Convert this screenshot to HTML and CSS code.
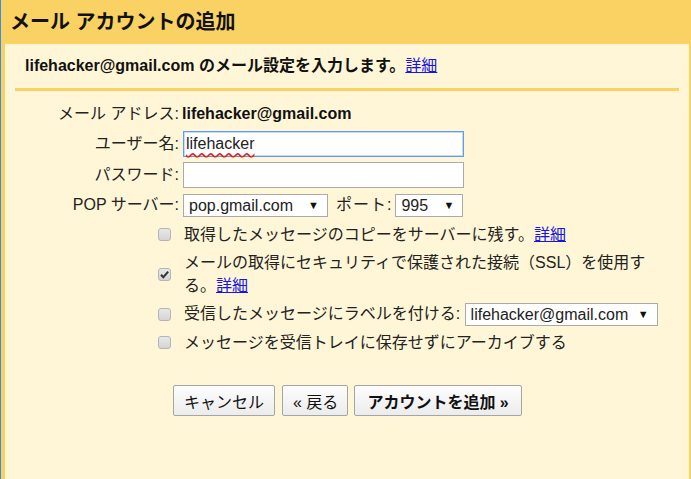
FILE: index.html
```html
<!DOCTYPE html>
<html lang="ja">
<head>
    <meta charset="UTF-8">
    <title>メール アカウントの追加</title>
    <link rel="stylesheet" href="styles.css">
</head>
<body>

<div class="frame">
    <div class="header">メール アカウントの追加</div>

    <div class="content">
        <div class="intro"><b>lifehacker@gmail.com のメール設定を入力します。</b><a href="#">詳細</a></div>
        <div class="divider"></div>

        <div class="form">
            <div class="row">
                <span class="label">メール アドレス:</span>
                <span class="value">lifehacker@gmail.com</span>
            </div>
            <div class="row">
                <span class="label">ユーザー名:</span>
                <div class="field focused"><span class="misspelled">lifehacker</span></div>
            </div>
            <div class="row row-pass">
                <span class="label">パスワード:</span>
                <div class="field"></div>
            </div>
            <div class="row">
                <span class="label">POP サーバー:</span>
                <span class="select select-server">pop.gmail.com</span>
                <span class="port-label">ポート:</span>
                <span class="select select-port">995</span>
            </div>

            <div class="options">
                <div class="option">
                    <span class="check"></span>
                    <div class="option-text">取得したメッセージのコピーをサーバーに残す。<a href="#">詳細</a></div>
                </div>
                <div class="option">
                    <span class="check checked">
                        <svg width="11" height="11" viewBox="0 0 11 11"><path d="M2 5.8 L4.3 8.2 L9.2 2.6" fill="none" stroke="#333" stroke-width="2"/></svg>
                    </span>
                    <div class="option-text">メールの取得にセキュリティで保護された接続（SSL）を使用する。<a href="#">詳細</a></div>
                </div>
                <div class="option">
                    <span class="check"></span>
                    <div class="option-text">受信したメッセージにラベルを付ける: <span class="select select-label">lifehacker@gmail.com</span></div>
                </div>
                <div class="option">
                    <span class="check"></span>
                    <div class="option-text">メッセージを受信トレイに保存せずにアーカイブする</div>
                </div>
            </div>

            <div class="buttons">
                <button class="btn btn-cancel">キャンセル</button>
                <button class="btn btn-back">« 戻る</button>
                <button class="btn btn-main">アカウントを追加 »</button>
            </div>
        </div>
    </div>
</div>

</body>
</html>
```

FILE: styles.css
```css
html, body { height: 100%; }
body { margin: 0; font-family: "Liberation Sans", "Noto Sans CJK JP", sans-serif; font-size: 16px; color: #222; background: #fad163; }
a { color: #1515e6; text-decoration: underline; }
.frame { display: flex; flex-direction: column; height: 100%; border-left: 1px solid #3d8de2; background: #fad163; box-sizing: border-box; }
.header { height: 44px; line-height: 44px; padding-left: 9px; font-size: 20px; font-weight: bold; color: #111; }
.content { flex-grow: 1; margin: 0 2px 0 4px; padding: 0 10px; background: #fff6d7; }
.intro { padding: 11px 10px 0; line-height: 22px; color: #111; }
.divider { height: 3px; margin-top: 11px; background: #fad163; }
.form { padding-top: 11px; }
.row { display: flex; align-items: center; margin-bottom: 5px; line-height: 24px; }
.row-pass { margin-top: 2px; }
.label { width: 164px; text-align: right; margin-right: 4px; }
.value { font-weight: bold; color: #111; margin-left: -1px; }
.field { width: 275px; height: 24px; line-height: 24px; border: 1px solid #aaa; background: #fff; padding: 0 2px; }
.field.focused { border-color: #5e9be8; box-shadow: inset 0 0 0 1px #c5dbf7; }
.misspelled { text-decoration: underline wavy #e02020; text-decoration-skip-ink: none; text-underline-offset: 3px; }
.select { position: relative; display: inline-block; box-sizing: border-box; height: 23px; line-height: 21px; border: 1px solid #aaa; background: #fff; padding-left: 5px; vertical-align: middle; }
.select::after { content: "▼"; position: absolute; right: 8px; top: 0; font-size: 11px; color: #111; }
.select-server { width: 145px; }
.select-port { width: 68px; }
.select-label { width: 193px; margin-left: 0; }
.port-label { margin: 0 3px 0 8px; letter-spacing: 1px; }
.options { margin-left: 143px; padding-top: 1px; }
.option { display: flex; align-items: center; margin-bottom: 5px; }
.option-text { width: 475px; line-height: 23px; margin-left: 13px; }
.check { display: flex; align-items: center; justify-content: center; width: 13px; height: 13px; box-sizing: border-box; border: 1px solid #b4b4b4; border-radius: 3px; background: linear-gradient(#e8e8e8, #d4d4d4); flex-shrink: 0; }
.buttons { display: flex; margin-left: 158px; margin-top: 31px; gap: 6px; }
.btn { height: 31px; padding: 0 10px; font-family: inherit; font-size: 16px; color: #111; border: 1px solid #a5a5a5; border-radius: 2px; background: linear-gradient(#fdfdfd, #ececec); }
.btn-cancel { margin-right: 1px; }
.btn-back { padding: 0 9px 0 10px; }
.btn-main { font-weight: bold; padding: 0 12px; }
```
